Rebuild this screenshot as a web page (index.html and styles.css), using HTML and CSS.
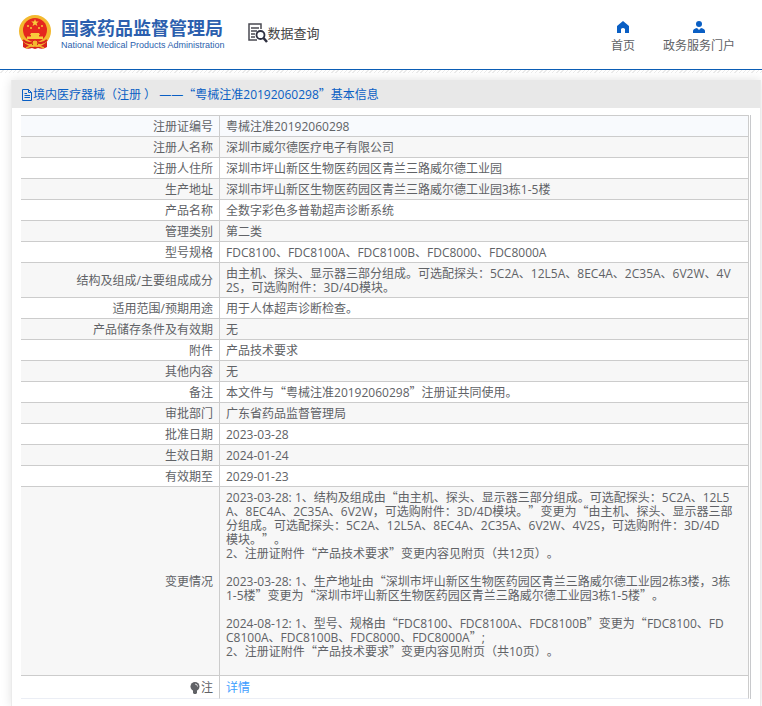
FILE: index.html
```html
<!DOCTYPE html>
<html lang="zh-CN">
<head>
    <meta charset="UTF-8">
    <meta name="viewport" content="width=device-width, initial-scale=1">
    <title>数据查询</title>
    <link rel="stylesheet" href="styles.css">
</head>
<body>
    <header class="header">
        <a class="logo" href="#">
            <svg class="emblem" viewBox="0 0 32 35" aria-hidden="true">
                <path d="M4 24 L4 32 Q8 35 13 33 L16 34 L19 33 Q24 35 28 32 L28 24 Z" fill="#d8231c"/>
                <circle cx="16" cy="16" r="16" fill="#f3b92f"/>
                <circle cx="16" cy="15" r="12" fill="#e5281e"/>
                <path d="M16 4 l1 2.6 h2.8 l-2.2 1.7 .8 2.7 -2.4-1.6 -2.4 1.6 .8-2.7 -2.2-1.7 h2.8z" fill="#f8ca3c"/>
                <circle cx="9" cy="11" r="1" fill="#f8ca3c"/>
                <circle cx="12" cy="13" r="1" fill="#f8ca3c"/>
                <circle cx="20" cy="13" r="1" fill="#f8ca3c"/>
                <circle cx="23" cy="11" r="1" fill="#f8ca3c"/>
                <path d="M12 18 h8 l1 2 h-1 v1.500 h4 V24 H8 v-2.500 h4 V20 h-1z" fill="#f8ca3c"/>
                <path d="M4 25 Q9 30 14 27 M28 25 Q23 30 18 27" fill="none" stroke="#d8231c" stroke-width="2"/>
                <circle cx="16" cy="28" r="3" fill="#f3b92f" stroke="#d8231c"/>
                <path d="M7 33 Q16 28 25 33" fill="none" stroke="#f3b92f" stroke-width="1.500"/>
            </svg>
            <span class="logo-text">
                <span class="logo-cn">国家药品监督管理局</span>
                <span class="logo-en">National Medical Products Administration</span>
            </span>
        </a>
        <a class="search-title" href="#">
            <svg class="search-icon" viewBox="0 0 20 20" aria-hidden="true">
                <path d="M13 6 V1 H1 V17 H9 M3 5 H11 M3 8 H9 M3 11 H7 M3 14 H7" fill="none" stroke="#4a4a52" stroke-width="1.500"/>
                <circle cx="12.500" cy="12" r="4" fill="#fff" stroke="#2f3040" stroke-width="1.800"/>
                <path d="M15.500 15 L19 19" stroke="#2f3040" stroke-width="2.500"/>
            </svg>
            数据查询
        </a>
        <nav class="nav">
            <a href="#">
                <svg viewBox="0 0 14 12" aria-hidden="true"><path d="M7 0 L13 5 V12 H9 V8 Q7 6 5 8 V12 H1 V5 Z"/></svg>
                首页
            </a>
            <a href="#">
                <svg viewBox="0 0 14 12" aria-hidden="true"><circle cx="7" cy="3" r="3"/><path d="M1 12 V10 Q1 8 5 7 L7 9 L9 7 Q13 8 13 10 V12 Z"/></svg>
                政务服务门户
            </a>
        </nav>
    </header>
    <div class="strip"></div>

    <main class="card">
        <h1 class="card-title">
            <svg class="doc-icon" viewBox="0 0 12 12" aria-hidden="true"><path d="M1.500 .5 H7.500 L10.500 3.500 V11.500 H1.500 Z M7.500 .5 V3.500 H10.500 M3.500 4.500 H6 M3.500 6.500 H9 M3.500 8.500 H9"/></svg>
            <span>境内医疗器械（注册 ） ——<span class="q">“</span>粤械注准20192060298<span class="q">”</span>基本信息</span>
        </h1>
        <div class="table-wrap">
            <table class="info">
                <tr><th scope="row">注册证编号</th><td>粤械注准20192060298</td></tr>
                <tr><th scope="row">注册人名称</th><td>深圳市威尔德医疗电子有限公司</td></tr>
                <tr><th scope="row">注册人住所</th><td>深圳市坪山新区生物医药园区青兰三路威尔德工业园</td></tr>
                <tr><th scope="row">生产地址</th><td>深圳市坪山新区生物医药园区青兰三路威尔德工业园3栋1-5楼</td></tr>
                <tr><th scope="row">产品名称</th><td>全数字彩色多普勒超声诊断系统</td></tr>
                <tr><th scope="row">管理类别</th><td>第二类</td></tr>
                <tr><th scope="row">型号规格</th><td>FDC8100、FDC8100A、FDC8100B、FDC8000、FDC8000A</td></tr>
                <tr><th scope="row">结构及组成/主要组成成分</th><td>由主机、探头、显示器三部分组成。可选配探头：5C2A、12L5A、8EC4A、2C35A、6V2W、4V<br>2S，可选购附件：3D/4D模块。</td></tr>
                <tr><th scope="row">适用范围/预期用途</th><td>用于人体超声诊断检查。</td></tr>
                <tr><th scope="row">产品储存条件及有效期</th><td>无</td></tr>
                <tr><th scope="row">附件</th><td>产品技术要求</td></tr>
                <tr><th scope="row">其他内容</th><td>无</td></tr>
                <tr><th scope="row">备注</th><td>本文件与<span class="q">“</span>粤械注准20192060298<span class="q">”</span>注册证共同使用。</td></tr>
                <tr><th scope="row">审批部门</th><td>广东省药品监督管理局</td></tr>
                <tr><th scope="row">批准日期</th><td>2023-03-28</td></tr>
                <tr><th scope="row">生效日期</th><td>2024-01-24</td></tr>
                <tr><th scope="row">有效期至</th><td>2029-01-23</td></tr>
                <tr>
                    <th scope="row">变更情况</th>
                    <td>
                        2023-03-28: 1、结构及组成由<span class="q">“</span>由主机、探头、显示器三部分组成。可选配探头：5C2A、12L5<br>
                        A、8EC4A、2C35A、6V2W，可选购附件：3D/4D模块。<span class="q">”</span>变更为<span class="q">“</span>由主机、探头、显示器三部<br>
                        分组成。可选配探头：5C2A、12L5A、8EC4A、2C35A、6V2W、4V2S，可选购附件：3D/4D<br>
                        模块。<span class="q">”</span>。<br>
                        2、注册证附件<span class="q">“</span>产品技术要求<span class="q">”</span>变更内容见附页（共12页）。<br>
                        <br>
                        2023-03-28: 1、生产地址由<span class="q">“</span>深圳市坪山新区生物医药园区青兰三路威尔德工业园2栋3楼，3栋<br>
                        1-5楼<span class="q">”</span>变更为<span class="q">“</span>深圳市坪山新区生物医药园区青兰三路威尔德工业园3栋1-5楼<span class="q">”</span>。<br>
                        <br>
                        2024-08-12: 1、型号、规格由<span class="q">“</span>FDC8100、FDC8100A、FDC8100B<span class="q">”</span>变更为<span class="q">“</span>FDC8100、FD<br>
                        C8100A、FDC8100B、FDC8000、FDC8000A<span class="q">”</span>;<br>
                        2、注册证附件<span class="q">“</span>产品技术要求<span class="q">”</span>变更内容见附页（共10页）。<br>
                        <br>
                    </td>
                </tr>
                <tr class="note">
                    <th scope="row"><svg class="bulb" viewBox="0 0 10 12" aria-hidden="true"><circle cx="5" cy="4.500" r="4.500"/><path d="M3 8 H7 V11 L6 12 H4 L3 11 Z"/><path d="M5 2 Q7.500 2 7.500 4.500" fill="none" stroke="#ddd"/></svg>注</th>
                    <td><a href="#">详情</a></td>
                </tr>
            </table>
        </div>
    </main>
</body>
</html>
```
FILE: styles.css
```css
* {
    box-sizing: border-box;
}

body {
    margin: 0;
    min-height: 100vh;
    display: flex;
    flex-direction: column;
    background: #fff;
    color: #606266;
    font-family: "Open Sans", "Noto Sans CJK SC", sans-serif;
    font-size: 12px;
    line-height: 14px;
    text-spacing-trim: space-all;
}

a {
    color: inherit;
    text-decoration: none;
}

.header {
    display: flex;
    align-items: flex-start;
    height: 70px;
    padding: 0 27px 0 19px;
    border-bottom: 1px solid #0b5db5;
}

/* hatched strip under the header line */
.strip {
    height: 3px;
    background: repeating-linear-gradient(135deg, #fff 0 2px, #ebebeb 2px 3px);
}

.logo {
    display: flex;
    gap: 10px;
    padding-top: 15px;
    color: #2c5fae;
}

.emblem {
    width: 32px;
    height: 35px;
}

.logo-text {
    display: flex;
    flex-direction: column;
    white-space: nowrap;
}

.logo-cn {
    font-size: 18px;
    line-height: 26px;
    font-weight: bold;
}

.logo-en {
    font-family: "Liberation Sans", Arial, sans-serif;
    font-size: 9px;
    line-height: 8px;
}

.search-title {
    display: flex;
    align-items: center;
    margin-left: 23px;
    padding-top: 23px;
    color: #444;
    font-size: 13px;
    line-height: 20px;
}

.search-icon {
    width: 20px;
    height: 20px;
}

.nav {
    display: flex;
    gap: 28px;
    margin-left: auto;
    padding-top: 21px;
}

.nav a {
    display: flex;
    flex-direction: column;
    align-items: center;
    gap: 5px;
    line-height: 16px;
}

.nav svg {
    width: 14px;
    height: 12px;
    fill: #0a5fc4;
}

.card {
    flex: 1;
    margin: 7px 1px 0 11px;
    border: 1px solid #ebebeb;
    border-width: 0 1px;
    box-shadow: 0 0 10px rgba(0, 0, 0, 0.12);
}

.card-title {
    display: flex;
    align-items: center;
    height: 28px;
    margin: 0;
    padding: 2px 0 0 9px;
    background: #e8e8e8;
    color: #0a5fc4;
    font-size: 12px;
    font-weight: normal;
    white-space: nowrap;
}

.doc-icon {
    width: 12px;
    height: 12px;
    fill: none;
    stroke: #0a5fc4;
}

.table-wrap {
    margin: 7px 9px 0;
    border-right: 1px solid #c8c9cc;
    padding-right: 1px;
}

.info {
    width: 100%;
    border-collapse: separate;
    border-spacing: 0;
    border-top: 1px solid #ccc;
}

.info th,
.info td {
    padding: 4px 6px 2px;
    border-right: 1px solid #ccc;
    border-bottom: 1px solid #ccc;
    font-weight: normal;
    white-space: nowrap;
}

.info th {
    width: 199px;
    text-align: right;
}

.info td {
    text-align: left;
}

.info tr:nth-child(even) {
    background: #f7f7f7;
}

.info tr:first-child {
    background: #f8fafd;
}

.info .note th,
.info .note td {
    padding: 5px 6px 3px;
    border-bottom-color: #ebeef5;
}

.note a {
    color: #409eff;
}

.bulb {
    width: 10px;
    height: 12px;
    margin-right: 1px;
    vertical-align: -2px;
    fill: #606266;
}

/* full-width quotes come from the Chinese font */
.q {
    font-family: "Noto Sans CJK SC", sans-serif;
    line-height: 0;
}
```
